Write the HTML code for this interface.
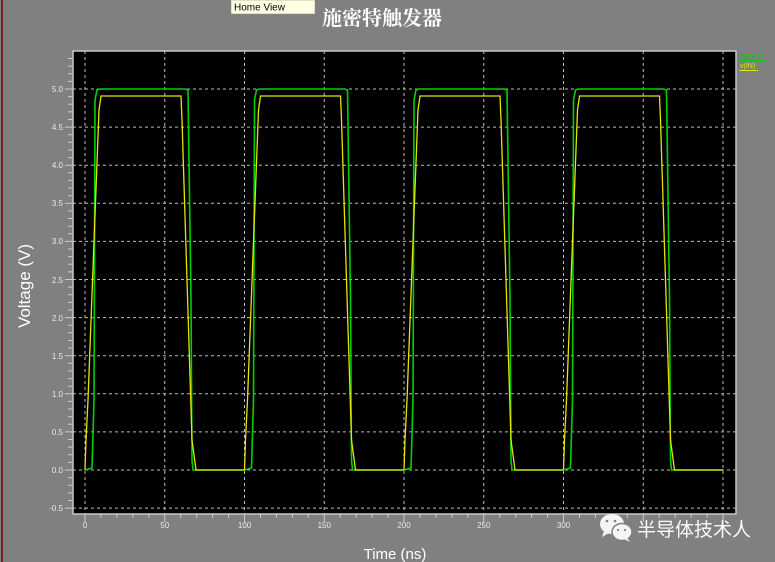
<!DOCTYPE html>
<html><head><meta charset="utf-8"><style>
html,body{margin:0;padding:0;background:#808080;width:775px;height:562px;overflow:hidden;font-family:"Liberation Sans",sans-serif}
</style></head><body>
<svg width="775" height="562" xmlns="http://www.w3.org/2000/svg" style="position:absolute;left:0;top:0">
<rect x="0" y="0" width="775" height="562" fill="#808080"/>
<rect x="1" y="0" width="2" height="562" fill="#7a2222"/>
<rect x="73" y="51" width="663" height="463" fill="#000" stroke="#c8c8c8" stroke-width="1.5"/>
<g stroke="#bbb" stroke-width="1" stroke-dasharray="3,3">
<line x1="85" y1="51" x2="85" y2="514"/><line x1="164.75" y1="51" x2="164.75" y2="514"/><line x1="244.5" y1="51" x2="244.5" y2="514"/><line x1="324.25" y1="51" x2="324.25" y2="514"/><line x1="404" y1="51" x2="404" y2="514"/><line x1="483.75" y1="51" x2="483.75" y2="514"/><line x1="563.5" y1="51" x2="563.5" y2="514"/><line x1="643.25" y1="51" x2="643.25" y2="514"/><line x1="723" y1="51" x2="723" y2="514"/>
<line x1="73" y1="508.1" x2="736" y2="508.1"/><line x1="73" y1="470" x2="736" y2="470"/><line x1="73" y1="431.9" x2="736" y2="431.9"/><line x1="73" y1="393.8" x2="736" y2="393.8"/><line x1="73" y1="355.7" x2="736" y2="355.7"/><line x1="73" y1="317.6" x2="736" y2="317.6"/><line x1="73" y1="279.5" x2="736" y2="279.5"/><line x1="73" y1="241.4" x2="736" y2="241.4"/><line x1="73" y1="203.3" x2="736" y2="203.3"/><line x1="73" y1="165.2" x2="736" y2="165.2"/><line x1="73" y1="127.1" x2="736" y2="127.1"/><line x1="73" y1="89" x2="736" y2="89"/>
</g>
<defs>
<path id="g" d="M0,470 L7,468 L9,400 L10,100 L12,90 L15,89 L100,89 L103,90 L106,300 L107,460 L108,470 L159.5,470" fill="none" stroke="#00d000" stroke-width="1.6"/>
<path id="y" d="M0,470 L1,440 L3,400 L14,110 L16,96 L96,96 L97,120 L107,440 L111,470 L159.5,470" fill="none" stroke="#e6e600" stroke-width="1.3"/>
</defs>
<use href="#g" x="85"/><use href="#g" x="244.5"/><use href="#g" x="404"/><use href="#g" x="563.5"/>
<use href="#y" x="85"/><use href="#y" x="244.5"/><use href="#y" x="404"/><use href="#y" x="563.5"/>
<g stroke="#ccc" stroke-width="1">
<path d="M65,508.1h8M68,500.5h5M68,492.9h5M68,485.2h5M68,477.6h5M65,470h8M68,462.4h5M68,454.8h5M68,447.1h5M68,439.5h5M65,431.9h8M68,424.3h5M68,416.7h5M68,409h5M68,401.4h5M65,393.8h8M68,386.2h5M68,378.6h5M68,370.9h5M68,363.3h5M65,355.7h8M68,348.1h5M68,340.5h5M68,332.8h5M68,325.2h5M65,317.6h8M68,310h5M68,302.4h5M68,294.7h5M68,287.1h5M65,279.5h8M68,271.9h5M68,264.3h5M68,256.6h5M68,249h5M65,241.4h8M68,233.8h5M68,226.2h5M68,218.5h5M68,210.9h5M65,203.3h8M68,195.7h5M68,188.1h5M68,180.4h5M68,172.8h5M65,165.2h8M68,157.6h5M68,150h5M68,142.3h5M68,134.7h5M65,127.1h8M68,119.5h5M68,111.9h5M68,104.2h5M68,96.6h5M65,89h8M68,81.4h5M68,73.8h5M68,66.1h5M68,58.5h5"/>
<path d="M85,514v8M101,514v4M116.9,514v4M132.9,514v4M148.8,514v4M164.75,514v8M180.7,514v4M196.7,514v4M212.6,514v4M228.6,514v4M244.5,514v8M260.5,514v4M276.4,514v4M292.4,514v4M308.3,514v4M324.25,514v8M340.2,514v4M356.2,514v4M372.1,514v4M388.1,514v4M404,514v8M420,514v4M435.9,514v4M451.9,514v4M467.8,514v4M483.75,514v8M499.7,514v4M515.7,514v4M531.6,514v4M547.6,514v4M563.5,514v8M579.5,514v4M595.4,514v4M611.4,514v4M627.3,514v4M643.25,514v8M659.2,514v4M675.2,514v4M691.1,514v4M707.1,514v4M723,514v8"/>
</g>
<g fill="#e8e8e8" font-size="8" text-anchor="end">
<text x="63" y="511">-0.5</text><text x="63" y="473">0.0</text><text x="63" y="435">0.5</text><text x="63" y="397">1.0</text><text x="63" y="359">1.5</text><text x="63" y="321">2.0</text><text x="63" y="283">2.5</text><text x="63" y="244">3.0</text><text x="63" y="206">3.5</text><text x="63" y="168">4.0</text><text x="63" y="130">4.5</text><text x="63" y="92">5.0</text>
</g>
<g fill="#e8e8e8" font-size="8" text-anchor="middle">
<text x="85" y="528">0</text><text x="164.75" y="528">50</text><text x="244.5" y="528">100</text><text x="324.25" y="528">150</text><text x="404" y="528">200</text><text x="483.75" y="528">250</text><text x="563.5" y="528">300</text>
</g>
<text x="740" y="58" font-size="7" fill="#00d000">v(OUT)</text>
<rect x="739" y="60" width="26" height="1" fill="#00d000"/>
<text x="740" y="68" font-size="7" fill="#e6e600">v(IN)</text>
<rect x="739" y="70" width="19" height="1" fill="#e6e600"/>
<text x="382" y="25" font-size="20" font-weight="bold" fill="#fff" text-anchor="middle" font-family="'Noto Serif CJK SC',serif">施密特触发器</text>
<rect x="231" y="0" width="84" height="14" fill="#ffffe1" stroke="#888" stroke-width="0.5"/>
<text x="234" y="10.5" font-size="10" fill="#000">Home View</text>
<text x="30" y="286" font-size="17" fill="#fff" text-anchor="middle" transform="rotate(-90 30 286)">Voltage (V)</text>
<text x="395" y="559" font-size="15" fill="#fff" text-anchor="middle">Time (ns)</text>
<g fill="#f4f4f4">
<ellipse cx="612" cy="524" rx="12" ry="10"/>
<path d="M604,531 L602,537 L609,533Z"/>
<ellipse cx="622" cy="532" rx="10" ry="8.5" stroke="#808080" stroke-width="1.5"/>
<path d="M627,538 L630,542 L624,539Z"/>
</g>
<g fill="#808080"><circle cx="607" cy="521" r="1.3"/><circle cx="615" cy="521" r="1.3"/><circle cx="618" cy="530" r="1.1"/><circle cx="625" cy="530" r="1.1"/></g>
<text x="637" y="536" font-size="19" fill="#fafafa" font-family="'Noto Sans CJK SC',sans-serif">半导体技术人</text>
</svg>
</body></html>
